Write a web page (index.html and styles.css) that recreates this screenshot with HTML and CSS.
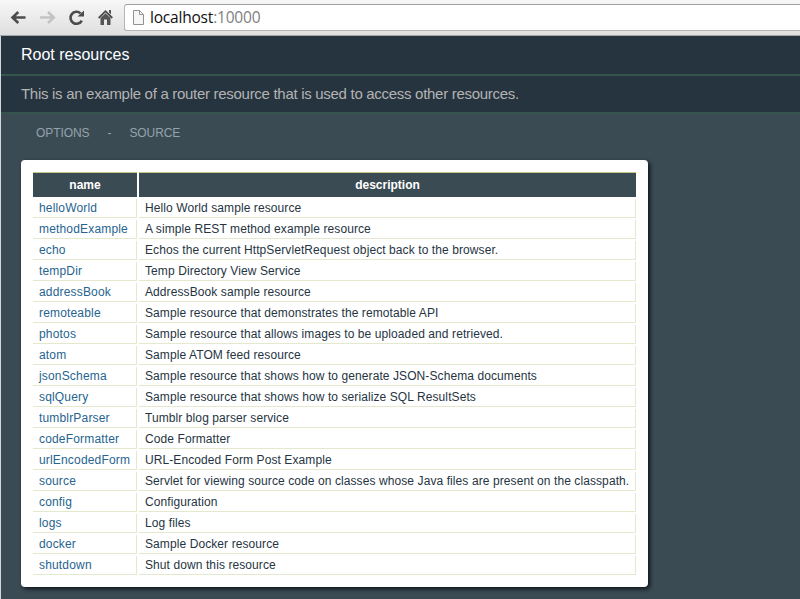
FILE: index.html
```html
<!DOCTYPE html>
<html lang="en">
<head>
<meta charset="utf-8">
<title>Root resources</title>
<link rel="stylesheet" href="styles.css">
</head>
<body>
<div class="toolbar">
  <svg class="icons" width="124" height="35" viewBox="0 0 124 35" fill="none">
    <path d="M25.5 17.5H13M18.3 12L12.5 17.5L18.3 23" stroke="#4c4c4c" stroke-width="2.6"/>
    <path d="M40 17.5H53M48 12L53.8 17.5L48 23" stroke="#c3c3c3" stroke-width="2.6"/>
    <path d="M81.8 20.6A6 6 0 1 1 80.6 13.4" stroke="#4c4c4c" stroke-width="2.6"/>
    <path d="M84 10.5V16.5H77.5Z" fill="#4c4c4c"/>
    <path d="M98.7 18L105.5 11.2L112.3 18" stroke="#4c4c4c" stroke-width="1.8"/>
    <path d="M100.5 18L105.5 13.2L110.5 18V25H107V19.5H104V25H100.5ZM109 10H111V14.5L109 12.5Z" fill="#555"/>
  </svg>
  <div class="address">
    <svg class="page" width="13" height="17" viewBox="0 0 13 17"><path d="M1.5 1.5H7.5L11.5 5.5V15.5H1.5ZM7.5 1.5V5.5H11.5" fill="#f6f6f6" stroke="#929292"/></svg>
    <span class="url">localhost<span class="port">:10000</span></span>
  </div>
</div>
<main>
  <h1>Root resources</h1>
  <p class="intro">This is an example of a router resource that is used to access other resources.</p>
  <nav><a>OPTIONS</a><span>-</span><a>SOURCE</a></nav>
  <section class="panel">
    <table>
      <thead><tr><th class="name">name</th><th>description</th></tr></thead>
      <tbody>
      <tr><td><a>helloWorld</a></td><td>Hello World sample resource</td></tr>
      <tr><td><a>methodExample</a></td><td>A simple REST method example resource</td></tr>
      <tr><td><a>echo</a></td><td>Echos the current HttpServletRequest object back to the browser.</td></tr>
      <tr><td><a>tempDir</a></td><td>Temp Directory View Service</td></tr>
      <tr><td><a>addressBook</a></td><td>AddressBook sample resource</td></tr>
      <tr><td><a>remoteable</a></td><td>Sample resource that demonstrates the remotable API</td></tr>
      <tr><td><a>photos</a></td><td>Sample resource that allows images to be uploaded and retrieved.</td></tr>
      <tr><td><a>atom</a></td><td>Sample ATOM feed resource</td></tr>
      <tr><td><a>jsonSchema</a></td><td>Sample resource that shows how to generate JSON-Schema documents</td></tr>
      <tr><td><a>sqlQuery</a></td><td>Sample resource that shows how to serialize SQL ResultSets</td></tr>
      <tr><td><a>tumblrParser</a></td><td>Tumblr blog parser service</td></tr>
      <tr><td><a>codeFormatter</a></td><td>Code Formatter</td></tr>
      <tr><td><a>urlEncodedForm</a></td><td>URL-Encoded Form Post Example</td></tr>
      <tr><td><a>source</a></td><td>Servlet for viewing source code on classes whose Java files are present on the classpath.</td></tr>
      <tr><td><a>config</a></td><td>Configuration</td></tr>
      <tr><td><a>logs</a></td><td>Log files</td></tr>
      <tr><td><a>docker</a></td><td>Sample Docker resource</td></tr>
      <tr><td><a>shutdown</a></td><td>Shut down this resource</td></tr>
      </tbody>
    </table>
  </section>
</main>
</body>
</html>
```
FILE: styles.css
```css
* { box-sizing: border-box; }
body {
  margin: 0;
  height: 599px;
  overflow: hidden;
  background: #d5d8da;
  font-family: "Liberation Sans", Arial, sans-serif;
}
.toolbar {
  display: flex;
  height: 36px;
  background: linear-gradient(#f7f7f7, #dfdfdf);
  border-bottom: 1px solid #a3a6a8;
}
.icons { flex: none; }
.address {
  display: flex;
  align-items: center;
  flex: 1;
  height: 27px;
  margin-top: 4px;
  padding-left: 7px;
  background: #fff;
  border: 1px solid #b5b5b5;
  border-top-color: #a0a0a0;
  border-right: 0;
  border-radius: 3px 0 0 3px;
}
.page { flex: none; margin-right: 5px; }
.url {
  font: 15.5px/25px "Open Sans", sans-serif;
  letter-spacing: -0.2px;
  color: #111;
}
.port { color: #808080; }
main {
  height: 563px;
  margin-left: 1px;
  background: #3b4b54;
}
h1, .intro {
  margin: 0;
  padding-left: 20px;
  background: #26343f;
  border-bottom: 2px solid #34544d;
  font-weight: 400;
}
h1 {
  height: 40px;
  font-size: 16px;
  line-height: 37px;
  color: #fff;
}
.intro {
  height: 38px;
  font-size: 15px;
  letter-spacing: -0.295px;
  line-height: 36px;
  color: #b3b3b3;
}
nav {
  display: flex;
  gap: 18px;
  height: 46px;
  padding-left: 35px;
  font-size: 12px;
  letter-spacing: -0.08px;
  line-height: 38px;
  color: #94a3ab;
}
.panel {
  width: 627px;
  height: 427px;
  margin-left: 20px;
  padding: 10px;
  background: #fff;
  border-radius: 4px;
  box-shadow: 2px 2px 4px #0b1418;
}
table {
  width: 607px;
  table-layout: fixed;
  border-collapse: separate;
  border-spacing: 2px;
  font-size: 12px;
  color: #26343f;
}
th {
  height: 25px;
  padding: 0;
  background: #3b4b54;
  border-top: 1px solid #c6c885;
  line-height: 24px;
  color: #fff;
}
.name { width: 104px; }
td {
  height: 19px;
  padding: 0 6px;
  border: solid #e4e8cc;
  border-width: 0 1px 1px 0;
  letter-spacing: 0.09px;
  line-height: 18px;
  white-space: nowrap;
}
td a {
  letter-spacing: 0.17px;
  color: #26648f;
}
```
